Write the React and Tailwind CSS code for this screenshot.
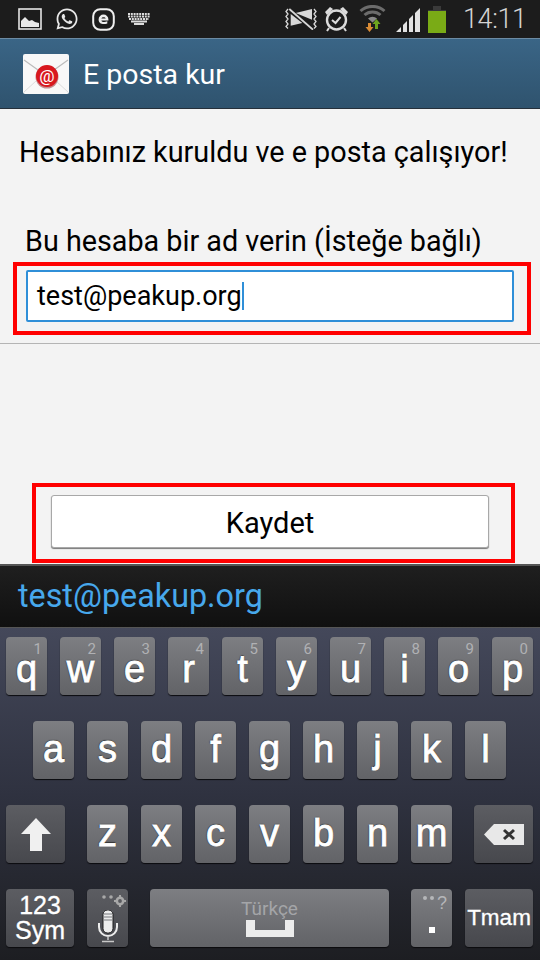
import React from 'react';
import { FaWhatsapp } from 'react-icons/fa';

const topRow = [['q', '1'], ['w', '2'], ['e', '3'], ['r', '4'], ['t', '5'], ['y', '6'], ['u', '7'], ['i', '8'], ['o', '9'], ['p', '0']];
const midRow = ['a', 's', 'd', 'f', 'g', 'h', 'j', 'k', 'l'];
const lowRow = ['z', 'x', 'c', 'v', 'b', 'n', 'm'];

const lightKey = 'bg-gradient-to-b from-[#7d7e82] to-[#626367]';
const darkKey = 'bg-gradient-to-b from-[#5c5d62] to-[#47484d]';
const keyBase = 'relative h-[58px] rounded-[4px] flex items-center justify-center text-white shadow-[0_1px_1px_#0b0b0e] [font-family:"Liberation_Sans",sans-serif]';
const letterText = 'text-[38px] leading-[28px] [text-shadow:0_-1px_1px_#2a2a2a,-1px_0_1px_#444] [-webkit-text-stroke:0.8px_#fff]';

function LetterKey({ label, hint }) {
  return (
    <div className={`${keyBase} ${lightKey} w-[41px]`}>
      {hint && (
        <span className="absolute right-[5px] top-[6px] text-[15px] leading-[12px] text-[#b0b1b4] [font-family:Roboto,sans-serif]">{hint}</span>
      )}
      <span className={`${letterText} ${hint ? 'mt-[6px]' : 'mt-[-3px]'}`}>{label}</span>
    </div>
  );
}

function StatusBar() {
  return (
    <div className="h-[38px] bg-[#1c1c1c] flex items-center justify-between pl-[18px] pr-[15px]">
      <div className="flex items-center gap-[13px]">
        <svg width="24" height="22" viewBox="0 0 24 22">
          <rect x="1" y="1" width="22" height="20" fill="none" stroke="#e4e4e4" strokeWidth="1.6" />
          <path d="M3 19V13l4-4 4 4 3-1 3 2 4 1v4z" fill="#e8e8e8" />
        </svg>
        <FaWhatsapp className="w-[24px] h-[24px] text-[#e8e8e8]" />
        <svg width="23" height="23" viewBox="0 0 23 23">
          <rect x="1.200" y="1.200" width="20.600" height="20.600" rx="7" fill="none" stroke="#eee" strokeWidth="2" />
          <path d="M6.600 11.500a4.900 4.900 0 0 1 9.800 0v.9H9.400c.3 1.600 2.900 2 5.900.9v2.200c-4.600 1.500-8.700.2-8.700-4zM9.400 10.400h4.300c-.3-1.600-3.900-1.600-4.300 0z" fill="#eee" />
        </svg>
        <svg width="22" height="12" viewBox="0 0 22 12" fill="none" stroke="#dcdcdc">
          <path d="M0 1h22M0 3.500h22M1 6h20" strokeWidth="1.800" strokeDasharray="2 0.800" />
          <path d="M3 8.500h16M6 11h10" strokeWidth="2" />
        </svg>
      </div>
      <div className="flex items-center">
        <svg width="32" height="22" viewBox="0 0 32 22" fill="none">
          <path d="M6.700 6v11.700L18.300 15zM11.700 5L28 1v10.700z" fill="#d8d8d8" transform="translate(-1 0)" />
          <path d="M4.300 1L28 21.700" stroke="#d8d8d8" strokeWidth="1.800" />
          <path d="M3 1L1 3.500l2 2.500-2 2.500 2 2.500-2 2.500 2 2.500-2 2.500 2 2M29 1l2 2.500-2 2.500 2 2.500-2 2.500 2 2.500-2 2.500 2 2.500-2 2" stroke="#d8d8d8" strokeWidth="1.300" />
        </svg>
        <svg className="ml-[7px]" width="25" height="26" viewBox="0 0 25 26" fill="none">
          <circle cx="12.500" cy="14" r="9.500" stroke="#dcdcdc" strokeWidth="2.400" />
          <path d="M8 14l3.500 3 5-6" stroke="#dcdcdc" strokeWidth="2" />
          <path d="M1 6l5-5 3 2-6 6zM24 6l-5-5-3 2 6 6z" fill="#dcdcdc" />
          <path d="M5 22l-2 3M20 22l2 3" stroke="#dcdcdc" strokeWidth="2" />
        </svg>
        <svg className="ml-[10px]" width="27" height="28" viewBox="0 0 27 28" fill="none">
          <path d="M1.500 6a18 18 0 0 1 24 0" stroke="#6c6c6c" strokeWidth="3" />
          <path d="M5.500 10a12 12 0 0 1 16 0" stroke="#6c6c6c" strokeWidth="3" />
          <path d="M9 13.500a6.500 6.500 0 0 1 9 0l-4.500 4z" fill="#8a8a8a" />
          <path d="M9 18h3v4h2.500l-4 5-4-5H9z" fill="#d98b35" />
          <path d="M16 24h3v-5h2.500l-4-5-4 5H16z" fill="#6fa51e" />
        </svg>
        <svg className="ml-[10px]" width="24" height="25" viewBox="0 0 24 25" fill="#e2e2e2">
          <path d="M0 25l5-5v5zM7 18l4-4v11H7zM13 12l4-4v17h-4zM19 6l5-5v24h-5z" />
        </svg>
        <svg className="ml-[8px]" width="18" height="27" viewBox="0 0 18 27">
          <path d="M5 0h8v4h5v23H0V4h5z" fill="#3a3a3a" />
          <rect x="0" y="5" width="18" height="22" fill="#7aab16" />
        </svg>
        <span className="ml-[17px] w-[62px] text-[27px] leading-none font-light tracking-[-0.4px] whitespace-nowrap text-[#d4d4d4] [font-family:Roboto,sans-serif]">14:11</span>
      </div>
    </div>
  );
}

function ActionBar() {
  return (
    <div className="h-[71px] flex items-center pl-[23px] border-t border-t-[#6c8ba3] border-b border-b-[#26303a] bg-gradient-to-b from-[#3a6586] to-[#2f536e]">
      <svg width="46" height="40" viewBox="0 0 46 40">
        <rect x="0" y="0" width="46" height="40" rx="2" fill="#f8f8f8" />
        <path d="M1 6l14 10M45 6L31 16" fill="none" stroke="#bcbcbc" strokeWidth="1.200" />
        <path d="M1 38l12-11M45 38L33 27" stroke="#dcdcdc" strokeWidth="1" />
        <circle cx="24" cy="23" r="11.500" fill="#8a0c12" opacity="0.45" />
        <circle cx="24" cy="22" r="11" fill="#d8181f" />
        <text x="24" y="28" textAnchor="middle" fontSize="17" fontFamily="Roboto, sans-serif" fill="#fff">@</text>
      </svg>
      <span className="ml-[14px] mt-[3px] text-[28.500px] leading-none text-white [font-family:Roboto,sans-serif]">E posta kur</span>
    </div>
  );
}

function FormArea() {
  return (
    <div className="h-[455px] bg-[#f3f3f3] flex flex-col text-black [font-family:Roboto,sans-serif]">
      <p className="pl-[19px] pt-[27px] text-[28.800px] leading-[32px] whitespace-nowrap">Hesabınız kuruldu ve e posta çalışıyor!</p>
      <p className="pl-[25px] pt-[57px] text-[28.750px] leading-[32px] whitespace-nowrap">Bu hesaba bir ad verin (İsteğe bağlı)</p>
      <div className="ml-[13px] mt-[5px] w-[518px] h-[73px] border-4 border-[#ff0000] pl-[9px] pt-[4px]">
        <div className="w-[488px] h-[52px] bg-white border-2 border-[#2f8fd8] rounded-[2px] pl-[9px] flex items-center text-[27px]">
          <span className="mt-[1px]">test@peakup.org</span>
          <span className="w-[2px] h-[28px] bg-[#2f8fd8]" />
        </div>
      </div>
      <div className="mt-[8px] h-px bg-[#b4b4b4]" />
      <div className="ml-[32px] mt-[139px] w-[483px] h-[80px] border-4 border-[#ff0000] pl-[15px] pt-[8px]">
        <div className="w-[438px] h-[53px] bg-white rounded-[3px] border border-[#a8a8a8] shadow-[0_1px_1px_#777] flex items-center justify-center pt-[5px] text-[29px]">
          Kaydet
        </div>
      </div>
    </div>
  );
}

function Keyboard() {
  return (
    <div className="h-[333px] bg-gradient-to-b from-[#44485a] via-[#2f3240] to-[#1d1e22] pt-[9px] flex flex-col gap-[26px] border-t border-t-[#555]">
      <div className="flex gap-[13px] pl-[6px]">
        {topRow.map(([l, h]) => <LetterKey key={l} label={l} hint={h} />)}
      </div>
      <div className="flex gap-[13px] pl-[33px]">
        {midRow.map((l) => <LetterKey key={l} label={l} />)}
      </div>
      <div className="flex pl-[6px]">
        <div className={`${keyBase} ${darkKey} w-[59px]`}>
          <svg width="30" height="33" viewBox="0 0 30 33">
            <path d="M15 0l15 16H21v17H9V16H0z" fill="#f0f0f0" />
          </svg>
        </div>
        <div className="flex gap-[13px] ml-[22px]">
          {lowRow.map((l) => <LetterKey key={l} label={l} />)}
        </div>
        <div className={`${keyBase} ${darkKey} w-[59px] ml-[22px]`}>
          <svg width="40" height="21" viewBox="0 0 40 21">
            <path d="M10 0h30v21H10L0 10.500z" fill="#e8e8e8" />
            <path d="M20 6l10 9M30 6l-10 9" stroke="#333" strokeWidth="3" />
          </svg>
        </div>
      </div>
      <div className="flex pl-[6px]">
        <div className={`${keyBase} ${darkKey} w-[68px] flex-col`}>
          <span className="text-[25px] leading-[25px] [-webkit-text-stroke:0.3px_#fff]">123</span>
          <span className="text-[25px] leading-[25px] [-webkit-text-stroke:0.3px_#fff]">Sym</span>
        </div>
        <div className={`${keyBase} ${darkKey} w-[41px] ml-[13px]`}>
          <svg className="mt-[17px]" width="22" height="33" viewBox="0 0 22 33" fill="none">
            <rect x="6" y="0" width="10" height="23" rx="4.500" fill="#ececec" stroke="#1d1d1f" />
            <path d="M7 4h8M7 7h8M7 10h8" stroke="#77787c" strokeWidth="1" />
            <path d="M2 13v4c0 5 4 9 9 9s9-4 9-9v-4" stroke="#ececec" strokeWidth="2" />
            <path d="M11 26v4M5 31.500h12" stroke="#c8c8c8" strokeWidth="1.500" />
          </svg>
          <svg className="absolute right-[2px] top-[5px]" width="24" height="14" viewBox="0 0 24 14" fill="#a8a8a8">
            <circle cx="2" cy="3" r="1.800" />
            <circle cx="9" cy="3" r="1.800" />
            <circle cx="18" cy="7" r="3.200" fill="none" stroke="#a8a8a8" strokeWidth="2.600" />
            <path d="M17 1h2v3h-2zM17 10h2v3h-2zM12 6h3v2h-3zM21 6h3v2h-3z" />
          </svg>
        </div>
        <div className={`${keyBase} ${lightKey} w-[239px] ml-[22px] flex-col`}>
          <span className="text-[19px] leading-[20px] text-[#a4a5a8] [font-family:Roboto,sans-serif]">Türkçe</span>
          <svg className="mt-[1px]" width="48" height="17" viewBox="0 0 48 17">
            <path d="M0 0h9v10h30V0h9v17H0z" fill="#ececec" />
          </svg>
        </div>
        <div className={`${keyBase} ${lightKey} w-[41px] ml-[22px]`}>
          <span className="absolute right-[5px] top-[3px] flex items-start gap-[3px] text-[18px] leading-[22px] text-[#b5b6b9]">
            <span className="w-[4px] h-[4px] mt-[4px] rounded-full bg-[#b5b6b9]" />
            <span className="w-[4px] h-[4px] mt-[4px] rounded-full bg-[#b5b6b9]" />
            ?
          </span>
          <span className="w-[6px] h-[6px] bg-white mt-[24px] shrink-0" />
        </div>
        <div className={`${keyBase} ${darkKey} w-[68px] ml-[13px]`}>
          <span className="text-[22.500px] leading-none [-webkit-text-stroke:0.3px_#fff]">Tmam</span>
        </div>
      </div>
    </div>
  );
}

export default function App() {
  return (
    <div className="w-[540px] h-[960px] overflow-hidden">
      <StatusBar />
      <ActionBar />
      <FormArea />
      <div className="h-[63px] border-t-2 border-t-[#555] bg-gradient-to-b from-[#1f1f1f] to-[#101010] pl-[18px] flex items-center">
        <span className="text-[32.300px] leading-none text-[#47a8ec] [font-family:Roboto,sans-serif]">test@peakup.org</span>
      </div>
      <Keyboard />
    </div>
  );
}
